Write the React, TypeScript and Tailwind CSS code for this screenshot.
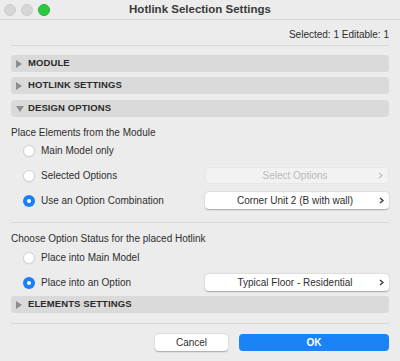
import React from 'react';

const Section = ({ title, open = false, className = '' }: { title: string; open?: boolean; className?: string }) => (
  <div className={`h-[17px] rounded-[4px] bg-[#dadada] flex items-center pl-[5px] ${className}`}>
    <span className="w-[12px] flex items-center justify-start">
      {open ? (
        <svg width="8" height="6" viewBox="0 0 8 6">
          <path d="M0 0 L8 0 L4 6 Z" fill="#8d8d8d" />
        </svg>
      ) : (
        <svg width="6" height="8" viewBox="0 0 6 8">
          <path d="M0 0 L6 4 L0 8 Z" fill="#8d8d8d" />
        </svg>
      )}
    </span>
    <span className="text-[9.5px] font-bold tracking-[0.1px] text-[#2a2a2a]">{title}</span>
  </div>
);

const Radio = ({ checked = false }: { checked?: boolean }) =>
  checked ? (
    <span className="w-[12px] h-[12px] rounded-full bg-[#1b7ff5] flex items-center justify-center">
      <span className="w-[4px] h-[4px] rounded-full bg-white" />
    </span>
  ) : (
    <span className="w-[12px] h-[12px] rounded-full bg-white border border-[#d4d4d4] shadow-[0_0.5px_1px_rgba(0,0,0,0.1)]" />
  );

const PopButton = ({ label, disabled = false }: { label: string; disabled?: boolean }) => (
  <div
    className={`w-[184px] h-[17px] rounded-[4px] flex items-center relative ${
      disabled
        ? 'bg-[#f2f2f2] border border-[#e6e6e6] text-[#b9b9b9]'
        : 'bg-white shadow-[0_0.5px_1.5px_rgba(0,0,0,0.3)] text-[#2e2e2e]'
    }`}
  >
    <span className="flex-1 text-center text-[10px] pr-[4px]">{label}</span>
    <svg width="5" height="7" viewBox="0 0 5 7" className="absolute right-[5px]">
      <path d="M1 1 L4 3.5 L1 6" fill="none" stroke={disabled ? '#c2c2c2' : '#333'} strokeWidth="1.3" />
    </svg>
  </div>
);

const RadioRow = ({ label, checked = false, button, className = '' }: { label: string; checked?: boolean; button?: React.ReactNode; className?: string }) => (
  <div className={`h-[17px] flex items-center ${className}`}>
    <div className="flex-1 flex items-center pl-[12px] gap-[6px]">
      <Radio checked={checked} />
      <span className="text-[10px] text-[#2e2e2e]">{label}</span>
    </div>
    {button}
  </div>
);

export default function App() {
  return (
    <div className="w-[400px] h-[361px] bg-[#ececec] flex flex-col overflow-hidden" style={{ fontFamily: '"Liberation Sans", Arial, sans-serif' }}>
      {/* Title bar */}
      <div className="h-[20px] border-b border-[#d6d6d6] flex items-center">
        <div className="flex items-center gap-[5px] pl-[4px] w-[60px]">
          <span className="w-[12px] h-[12px] rounded-full bg-[#d6d6d6] border border-[#cdcdcd]" />
          <span className="w-[12px] h-[12px] rounded-full bg-[#d6d6d6] border border-[#cdcdcd]" />
          <span className="w-[12px] h-[12px] rounded-full bg-[#2bc840] border border-[#25b238]" />
        </div>
        <div className="flex-1 text-center text-[11.5px] font-bold text-[#3a3a3a]">Hotlink Selection Settings</div>
        <div className="w-[60px]" />
      </div>

      <div className="px-[11px] flex flex-col">
        <div className="mt-[7px] h-[14px] flex items-center justify-end text-[10px] text-[#2e2e2e]">Selected: 1 Editable: 1</div>
        <div className="mt-[4px] h-px bg-[#d8d8d8]" />

        <Section title="MODULE" className="mt-[9px]" />
        <Section title="HOTLINK SETTINGS" className="mt-[5px]" />
        <Section title="DESIGN OPTIONS" open className="mt-[6px]" />

        <div className="mt-[8px] h-[14px] flex items-center text-[10px] text-[#2e2e2e]">Place Elements from the Module</div>
        <RadioRow label="Main Model only" className="mt-[3px]" />
        <RadioRow label="Selected Options" className="mt-[8px]" button={<PopButton label="Select Options" disabled />} />
        <RadioRow label="Use an Option Combination" checked className="mt-[8px]" button={<PopButton label="Corner Unit 2 (B with wall)" />} />

        <div className="mt-[13px] h-px bg-[#d8d8d8]" />

        <div className="mt-[8px] h-[14px] flex items-center text-[10px] text-[#2e2e2e]">Choose Option Status for the placed Hotlink</div>
        <RadioRow label="Place into Main Model" className="mt-[4px]" />
        <RadioRow label="Place into an Option" checked className="mt-[8px]" button={<PopButton label="Typical Floor - Residential" />} />

        <Section title="ELEMENTS SETTINGS" className="mt-[5px]" />

        <div className="mt-[10px] h-px bg-[#d8d8d8]" />

        <div className="mt-[10px] flex justify-end gap-[11px]">
          <button className="w-[73px] h-[17px] rounded-[4px] bg-white shadow-[0_0.5px_1.5px_rgba(0,0,0,0.3)] text-[10px] text-[#2e2e2e]">Cancel</button>
          <button className="w-[150px] h-[17px] rounded-[4px] bg-[#1a83f8] text-[10px] font-bold text-white">OK</button>
        </div>
      </div>
    </div>
  );
}
